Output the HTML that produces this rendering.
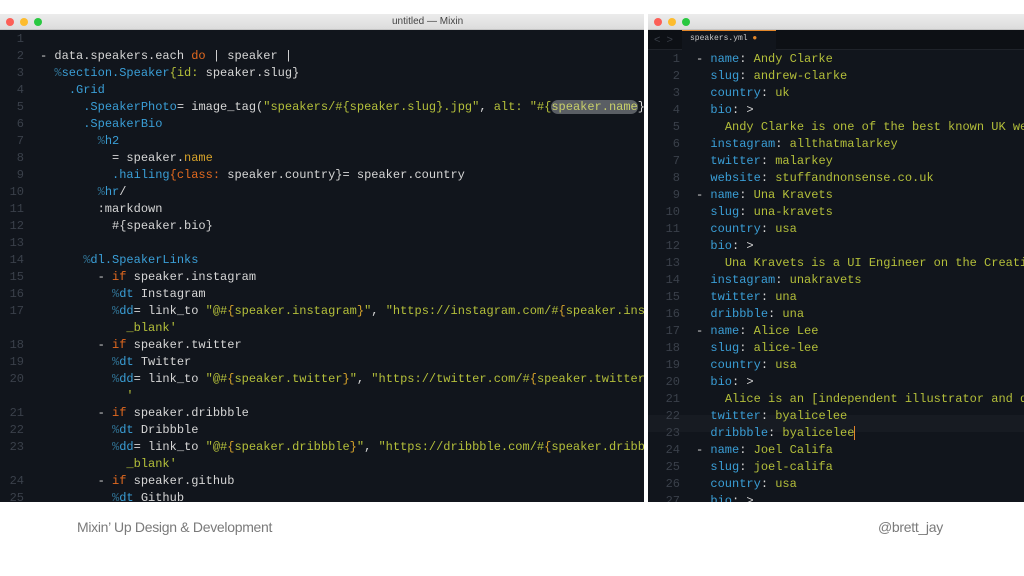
<!DOCTYPE html>
<html><head><meta charset="utf-8"><style>
*{margin:0;padding:0;box-sizing:border-box}
body{width:1024px;height:576px;background:#fff;position:relative;overflow:hidden;font-family:"Liberation Sans",sans-serif}
.win{position:absolute;top:14px;height:488px;background:#11151c;overflow:hidden}
.tb{position:absolute;left:0;right:0;top:0;height:16px;background:linear-gradient(#ececec,#dcdcdc);border-bottom:1px solid #c4c4c4}
.dot{position:absolute;top:4px;width:8px;height:8px;border-radius:50%}
.r{background:#fc5f57}.y{background:#fdbc2e}.g{background:#29c840}
.ttl{position:absolute;top:2px;font-size:10px;color:#444}
pre{position:absolute;font-family:"Liberation Mono",monospace;font-size:12px;line-height:17px;color:#d6d6d6;white-space:pre}
.ln{color:#3a404a;text-align:right}
.b{color:#3a9ed6}.p{color:#2f6f90}.o{color:#e2691f}.s{color:#b4bf3a}.k{color:#d7a32a}
.hl{background:#5a5e64;border-radius:7px;color:#c8cf6a}
.foot{position:absolute;top:519px;font-size:14px;color:#7a7a7a;letter-spacing:-.3px}
</style></head><body>
<div class="win" style="left:0;width:644px">
 <div class="tb"><div class="dot r" style="left:6px"></div><div class="dot y" style="left:20px"></div><div class="dot g" style="left:34px"></div><div class="ttl" style="left:392px">untitled — Mixin</div></div>
<pre class="ln" style="left:0;width:24px;top:17px">1
2
3
4
5
6
7
8
9
10
11
12
13
14
15
16
17

18
19
20

21
22
23

24
25</pre>
<pre style="left:40px;top:34px">- data.speakers.each <span class="o">do</span> | speaker |
  <span class="p">%</span><span class="b">section.Speaker</span><span class="s">{id:</span> speaker.slug}
    <span class="b">.Grid</span>
      <span class="b">.SpeakerPhoto</span>= image_tag(<span class="s">"speakers/#{speaker.slug}.jpg"</span>, <span class="s">alt:</span> <span class="s">"#{</span><span class="hl">speaker.name</span>}")
      <span class="b">.SpeakerBio</span>
        <span class="p">%</span><span class="b">h2</span>
          = speaker.<span class="k">name</span>
          <span class="b">.hailing</span><span class="o">{class:</span> speaker.country}= speaker.country
        <span class="p">%</span><span class="b">hr</span>/
        :markdown
          #{speaker.bio}

      <span class="p">%</span><span class="b">dl.SpeakerLinks</span>
        - <span class="o">if</span> speaker.instagram
          <span class="p">%</span><span class="b">dt</span> Instagram
          <span class="p">%</span><span class="b">dd</span>= link_to <span class="s">"@#</span><span class="k">{</span><span class="s">speaker.instagram</span><span class="k">}</span><span class="s">"</span>, <span class="s">"https://instagram.com/#</span><span class="k">{</span><span class="s">speaker.instagram}"</span>
            <span class="s">_blank'</span>
        - <span class="o">if</span> speaker.twitter
          <span class="p">%</span><span class="b">dt</span> Twitter
          <span class="p">%</span><span class="b">dd</span>= link_to <span class="s">"@#</span><span class="k">{</span><span class="s">speaker.twitter</span><span class="k">}</span><span class="s">"</span>, <span class="s">"https://twitter.com/#</span><span class="k">{</span><span class="s">speaker.twitter}"</span>
            <span class="s">'</span>
        - <span class="o">if</span> speaker.dribbble
          <span class="p">%</span><span class="b">dt</span> Dribbble
          <span class="p">%</span><span class="b">dd</span>= link_to <span class="s">"@#</span><span class="k">{</span><span class="s">speaker.dribbble</span><span class="k">}</span><span class="s">"</span>, <span class="s">"https://dribbble.com/#</span><span class="k">{</span><span class="s">speaker.dribbble}"</span>
            <span class="s">_blank'</span>
        - <span class="o">if</span> speaker.github
          <span class="p">%</span><span class="b">dt</span> Github</pre>
</div>
<div class="win" style="left:648px;width:376px">
 <div class="tb"><div class="dot r" style="left:6px"></div><div class="dot y" style="left:20px"></div><div class="dot g" style="left:34px"></div></div>
 <div style="position:absolute;top:16px;left:0;right:0;height:20px;background:#0d1015;border-bottom:1px solid #1f232a"></div>
 <div style="position:absolute;top:16px;left:6px;font-size:11px;color:#3a3f48;line-height:20px">&lt;&nbsp;&nbsp;&gt;</div>
 <div style="position:absolute;top:16px;left:34px;width:94px;height:20px;background:#11151c;border-top:1px solid #e2862a"></div>
 <div style="position:absolute;top:20px;left:42px;font-size:8px;color:#c8c8c8;font-family:'Liberation Mono',monospace">speakers.yml <span style="color:#e2862a">●</span></div>
 <div style="position:absolute;top:401px;left:0;right:0;height:17px;background:#171b22"></div>
<pre class="ln" style="left:0;width:32px;top:37px">1
2
3
4
5
6
7
8
9
10
11
12
13
14
15
16
17
18
19
20
21
22
23
24
25
26
27</pre>
<pre style="left:48px;top:37px">- <span class="b">name</span>: <span class="s">Andy Clarke</span>
  <span class="b">slug</span>: <span class="s">andrew-clarke</span>
  <span class="b">country</span>: <span class="s">uk</span>
  <span class="b">bio</span>: &gt;
    <span class="s">Andy Clarke is one of the best known UK web designers</span>
  <span class="b">instagram</span>: <span class="s">allthatmalarkey</span>
  <span class="b">twitter</span>: <span class="s">malarkey</span>
  <span class="b">website</span>: <span class="s">stuffandnonsense.co.uk</span>
- <span class="b">name</span>: <span class="s">Una Kravets</span>
  <span class="b">slug</span>: <span class="s">una-kravets</span>
  <span class="b">country</span>: <span class="s">usa</span>
  <span class="b">bio</span>: &gt;
    <span class="s">Una Kravets is a UI Engineer on the Creative</span>
  <span class="b">instagram</span>: <span class="s">unakravets</span>
  <span class="b">twitter</span>: <span class="s">una</span>
  <span class="b">dribbble</span>: <span class="s">una</span>
- <span class="b">name</span>: <span class="s">Alice Lee</span>
  <span class="b">slug</span>: <span class="s">alice-lee</span>
  <span class="b">country</span>: <span class="s">usa</span>
  <span class="b">bio</span>: &gt;
    <span class="s">Alice is an [independent illustrator and designer</span>
  <span class="b">twitter</span>: <span class="s">byalicelee</span>
  <span class="b">dribbble</span>: <span class="s">byalicelee</span><span style="border-left:1.5px solid #e2862a"></span>
- <span class="b">name</span>: <span class="s">Joel Califa</span>
  <span class="b">slug</span>: <span class="s">joel-califa</span>
  <span class="b">country</span>: <span class="s">usa</span>
  <span class="b">bio</span>: &gt;</pre>
</div>
<div class="foot" style="left:77px">Mixin’ Up Design &amp; Development</div>
<div class="foot" style="left:878px">@brett_jay</div>
</body></html>
